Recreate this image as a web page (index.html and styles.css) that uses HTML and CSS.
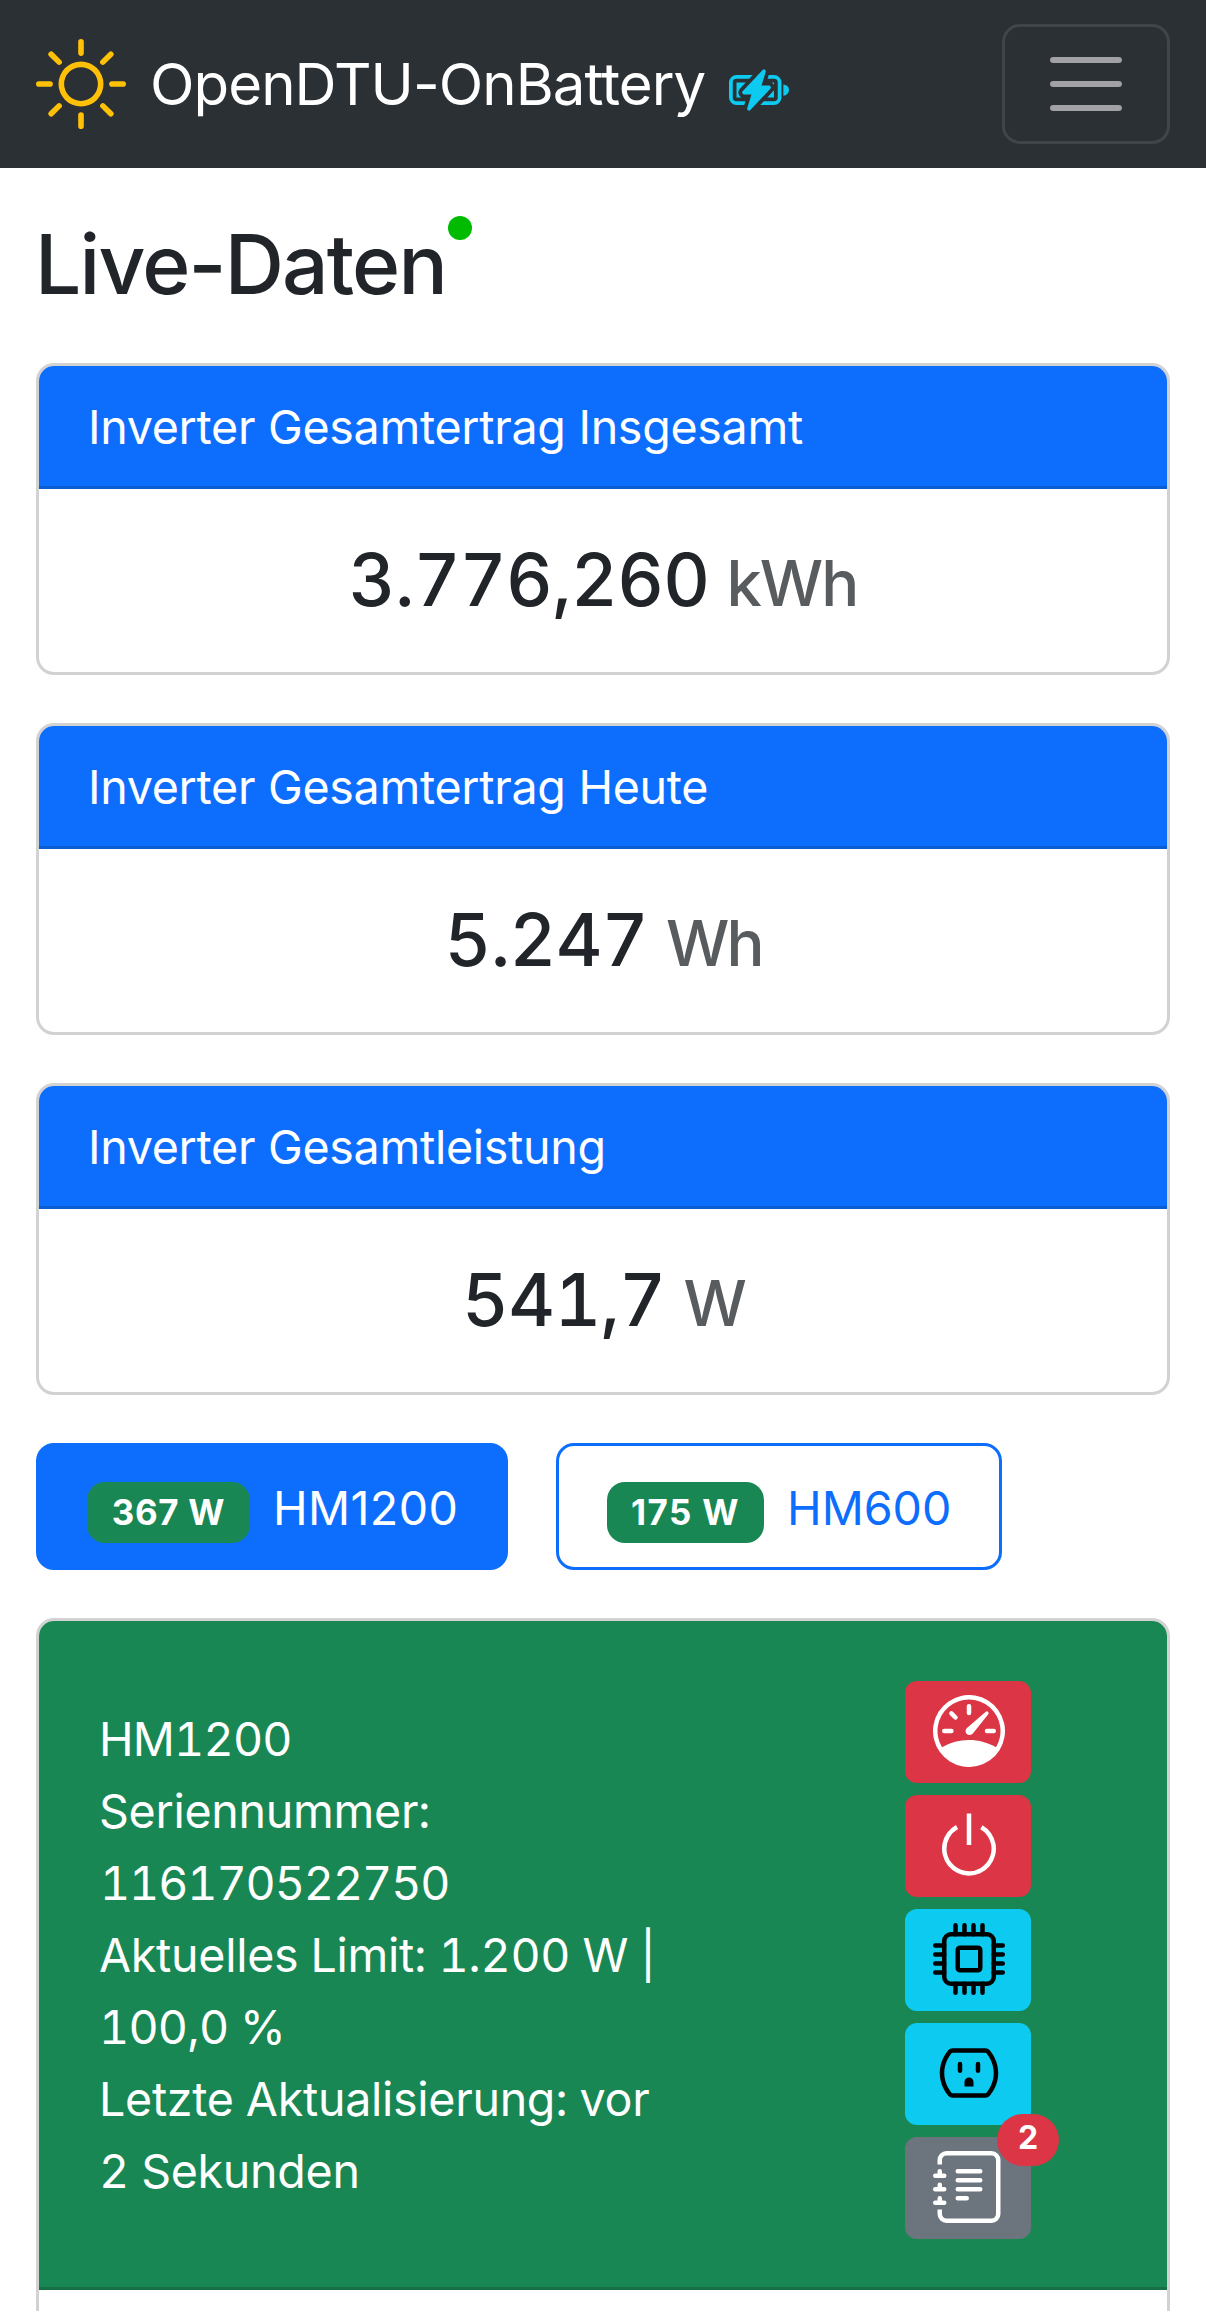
FILE: index.html
```html
<!DOCTYPE html>
<html lang="de">
<head>
<meta charset="utf-8">
<title>OpenDTU-OnBattery</title>
<link rel="stylesheet" href="styles.css">
</head>
<body>
<nav class="navbar">
  <a class="brand">
    <svg class="sun" viewBox="0 0 16 16" fill="currentColor"><path d="M8 11a3 3 0 1 1 0-6 3 3 0 0 1 0 6m0 1a4 4 0 1 0 0-8 4 4 0 0 0 0 8M8 0a.5.5 0 0 1 .5.5v2a.5.5 0 0 1-1 0v-2A.5.5 0 0 1 8 0m0 13a.5.5 0 0 1 .5.5v2a.5.5 0 0 1-1 0v-2A.5.5 0 0 1 8 13m8-5a.5.5 0 0 1-.5.5h-2a.5.5 0 0 1 0-1h2a.5.5 0 0 1 .5.5M3 8a.5.5 0 0 1-.5.5h-2a.5.5 0 0 1 0-1h2A.5.5 0 0 1 3 8m10.657-5.657a.5.5 0 0 1 0 .707l-1.414 1.415a.5.5 0 1 1-.707-.708l1.414-1.414a.5.5 0 0 1 .707 0m-9.193 9.193a.5.5 0 0 1 0 .707L3.05 13.657a.5.5 0 0 1-.707-.707l1.414-1.414a.5.5 0 0 1 .707 0m9.193 2.121a.5.5 0 0 1-.707 0l-1.414-1.414a.5.5 0 0 1 .707-.707l1.414 1.414a.5.5 0 0 1 0 .707M4.464 4.465a.5.5 0 0 1-.707 0L2.343 3.05a.5.5 0 1 1 .707-.707l1.414 1.414a.5.5 0 0 1 0 .708"/></svg>
    <span class="brand-name">OpenDTU-OnBattery</span>
    <svg class="battery" viewBox="0 0 16 16" fill="currentColor"><path d="M9.585 2.568a.5.5 0 0 1 .226.58L8.677 6.832h1.99a.5.5 0 0 1 .364.843l-5.334 5.667a.5.5 0 0 1-.842-.49L5.99 9.167H4a.5.5 0 0 1-.364-.843l5.333-5.667a.5.5 0 0 1 .616-.09z"/><path d="M2 4h4.332l-.94 1H2a1 1 0 0 0-1 1v4a1 1 0 0 0 1 1h2.38l-.308 1H2a2 2 0 0 1-2-2V6a2 2 0 0 1 2-2"/><path d="M2 6h2.45L2.908 7.639A1.5 1.5 0 0 0 3.313 10H2zm8.595-2-.308 1H12a1 1 0 0 1 1 1v4a1 1 0 0 1-1 1H9.276l-.942 1H12a2 2 0 0 0 2-2V6a2 2 0 0 0-2-2z"/><path d="M12 10h-1.783l1.542-1.639q.146-.156.241-.34zm0-3.354V6h-.646a1.5 1.5 0 0 1 .646.646M16 8a1.5 1.5 0 0 1-1.5 1.5v-3A1.5 1.5 0 0 1 16 8"/></svg>
  </a>
  <button class="toggler" aria-label="Navigation">
    <svg viewBox="0 0 30 30" fill="none" stroke="currentColor" stroke-width="2" stroke-linecap="round"><path d="M5 7h20M5 15h20M5 23h20"/></svg>
  </button>
</nav>

<main class="container">
  <h1 class="title">Live-Daten<span class="online-dot"></span></h1>

  <section class="card">
    <div class="card-header">Inverter Gesamtertrag Insgesamt</div>
    <h2 class="card-value"><span class="number">3.776,260</span><small class="unit unit-kwh">kWh</small></h2>
  </section>
  <section class="card">
    <div class="card-header">Inverter Gesamtertrag Heute</div>
    <h2 class="card-value"><span class="number">5.247</span><small class="unit">Wh</small></h2>
  </section>
  <section class="card">
    <div class="card-header">Inverter Gesamtleistung</div>
    <h2 class="card-value"><span class="number">541,7</span><small class="unit">W</small></h2>
  </section>

  <div class="pills">
    <button class="pill active"><span class="power">367 W</span><span class="pill-name">HM1200</span></button>
    <button class="pill"><span class="power narrow">175 W</span><span class="pill-name">HM600</span></button>
  </div>

  <section class="card inverter">
    <div class="inverter-header">
      <div class="info">
        <div class="figures">HM1200</div>
        <div>Seriennummer:</div>
        <div class="serial">116170522750</div>
        <div>Aktuelles Limit: 1.200 W |</div>
        <div class="figures">100,0 %</div>
        <div>Letzte Aktualisierung: vor</div>
        <div>2 Sekunden</div>
      </div>
      <div class="actions">
        <button class="btn danger"><svg viewBox="0 0 16 16" fill="currentColor"><path d="M8 2a.5.5 0 0 1 .5.5V4a.5.5 0 0 1-1 0V2.5A.5.5 0 0 1 8 2M3.732 3.732a.5.5 0 0 1 .707 0l.915.914a.5.5 0 1 1-.708.708l-.914-.915a.5.5 0 0 1 0-.707M2 8a.5.5 0 0 1 .5-.5h1.586a.5.5 0 0 1 0 1H2.5A.5.5 0 0 1 2 8m9.5 0a.5.5 0 0 1 .5-.5h1.5a.5.5 0 0 1 0 1H12a.5.5 0 0 1-.5-.5m.754-4.246a.39.39 0 0 0-.527-.02L7.547 7.31A.91.91 0 1 0 8.85 8.569l3.434-4.297a.39.39 0 0 0-.029-.518z"/><path fill-rule="evenodd" d="M6.664 15.889A8 8 0 1 1 9.336.11a8 8 0 0 1-2.672 15.78zm-4.665-4.283A11.95 11.95 0 0 1 8 10c2.186 0 4.236.585 6.001 1.606a7 7 0 1 0-12.002 0"/></svg></button>
        <button class="btn danger"><svg viewBox="0 0 16 16" fill="currentColor"><path d="M7.5 1v7h1V1z"/><path d="M3 8.812a5 5 0 0 1 2.578-4.375l-.485-.874A6 6 0 1 0 11 3.616l-.501.865A5 5 0 1 1 3 8.812"/></svg></button>
        <button class="btn info-btn"><svg viewBox="0 0 16 16" fill="none" stroke="currentColor" stroke-linecap="round"><rect x="2.5" y="2.5" width="11" height="11" rx="1.5"/><rect x="5.5" y="5.5" width="5" height="5" rx=".5"/><path d="M5 .5v2M7 .5v2M9 .5v2M11 .5v2M5 13.5v2M7 13.5v2M9 13.5v2M11 13.5v2M.5 5h2M.5 7h2M.5 9h2M.5 11h2M13.5 5h2M13.5 7h2M13.5 9h2M13.5 11h2"/></svg></button>
        <button class="btn info-btn"><svg viewBox="0 0 16 16" fill="currentColor"><path d="M3.34 2.994c.275-.338.68-.494 1.074-.494h7.172c.393 0 .798.156 1.074.494.578.708 1.84 2.534 1.84 5.006s-1.262 4.297-1.84 5.006c-.276.338-.68.494-1.074.494H4.414c-.394 0-.799-.156-1.074-.494C2.762 12.297 1.5 10.472 1.5 8s1.262-4.297 1.84-5.006m1.074.506a.38.38 0 0 0-.299.126C3.599 4.259 2.5 5.863 2.5 8s1.099 3.74 1.615 4.374c.06.073.163.126.3.126h7.17c.137 0 .24-.053.3-.126.516-.633 1.615-2.237 1.615-4.374s-1.099-3.74-1.615-4.374a.38.38 0 0 0-.3-.126z"/><path d="M6 5.5a.5.5 0 0 1 .5.5v1.5a.5.5 0 0 1-1 0V6a.5.5 0 0 1 .5-.5m4 0a.5.5 0 0 1 .5.5v1.5a.5.5 0 0 1-1 0V6a.5.5 0 0 1 .5-.5M7 10v1h2v-1a1 1 0 0 0-2 0"/></svg></button>
        <button class="btn secondary"><svg viewBox="0 0 16 16" fill="currentColor"><path d="M5 10.5a.5.5 0 0 1 .5-.5h2a.5.5 0 0 1 0 1h-2a.5.5 0 0 1-.5-.5m0-2a.5.5 0 0 1 .5-.5h5a.5.5 0 0 1 0 1h-5a.5.5 0 0 1-.5-.5m0-2a.5.5 0 0 1 .5-.5h5a.5.5 0 0 1 0 1h-5a.5.5 0 0 1-.5-.5m0-2a.5.5 0 0 1 .5-.5h5a.5.5 0 0 1 0 1h-5a.5.5 0 0 1-.5-.5"/><path d="M3 0h10a2 2 0 0 1 2 2v12a2 2 0 0 1-2 2H3a2 2 0 0 1-2-2v-1h1v1a1 1 0 0 0 1 1h10a1 1 0 0 0 1-1V2a1 1 0 0 0-1-1H3a1 1 0 0 0-1 1v1H1V2a2 2 0 0 1 2-2"/><path d="M1 5v-.5a.5.5 0 0 1 1 0V5h.5a.5.5 0 0 1 0 1h-2a.5.5 0 0 1 0-1zm0 3v-.5a.5.5 0 0 1 1 0V8h.5a.5.5 0 0 1 0 1h-2a.5.5 0 0 1 0-1zm0 3v-.5a.5.5 0 0 1 1 0v.5h.5a.5.5 0 0 1 0 1h-2a.5.5 0 0 1 0-1z"/></svg><span class="count">2</span></button>
      </div>
    </div>
    <div class="inverter-body"></div>
  </section>
</main>
</body>
</html>
```
FILE: styles.css
```css
* { box-sizing: border-box; }

body {
  margin: 0;
  height: 2311px;
  overflow: hidden;
  background: #fff;
  color: #212529;
  font: 400 46.6px/72px Inter, "Liberation Sans", sans-serif;
  letter-spacing: -.3px;
}

button {
  font: inherit;
  letter-spacing: inherit;
  margin: 0;
  padding: 0;
  border: 0;
}

svg { display: block; flex: none; }

.navbar {
  display: flex;
  align-items: center;
  justify-content: space-between;
  height: 168px;
  padding: 0 36px;
  background: #2b3035;
}
.brand { display: flex; align-items: center; color: #fff; }
.sun { width: 90px; height: 90px; color: #ffc107; }
.brand-name {
  margin-left: 24px;
  font-size: 58.2px;
  letter-spacing: -.95px;
  white-space: nowrap;
}
.battery { width: 60px; height: 60px; margin: 12px 0 0 24px; color: #0dcaf0; }
.toggler {
  display: flex;
  align-items: center;
  justify-content: center;
  width: 168px;
  height: 120px;
  border: 3px solid #414549;
  border-radius: 18px;
  background: transparent;
  color: #a1a1a6;
}
.toggler svg { width: 90px; height: 90px; }
.toggler path { transform: scaleX(1.09); transform-origin: center; }

.container { padding: 47px 36px 0; }

.title {
  position: relative;
  margin: 0 0 48px;
  text-indent: -1px;
  font-size: 82px;
  font-weight: 500;
  line-height: 100px;
  letter-spacing: -1.8px;
}
.online-dot {
  position: absolute;
  top: 1px;
  left: 412px;
  width: 24px;
  height: 24px;
  border-radius: 50%;
  background: #00bb00;
}

.card {
  margin-bottom: 48px;
  border: 3px solid #d2d2d2;
  border-radius: 18px;
  overflow: hidden;
}
.card-header {
  height: 123px;
  padding: 25px 48px 23px 49px;
  border-bottom: 3px solid #0b5ed2;
  background: #0d6efd;
  color: #fff;
}
.card-value {
  display: flex;
  align-items: baseline;
  justify-content: center;
  margin: 0;
  height: 183px;
  padding-top: 47px;
  font-size: 72.2px;
  font-weight: 500;
  line-height: 87px;
}
.number { font-variant-numeric: tabular-nums; letter-spacing: -.6px; }
.unit {
  margin-left: 18px;
  font-size: 63.2px;
  color: #585c5f;
  letter-spacing: -3px;
}
.unit-kwh { margin-left: 17px; letter-spacing: -2px; }

.pills { display: flex; gap: 48px; margin-bottom: 48px; }
.pill {
  display: flex;
  align-items: center;
  width: 472px;
  height: 127px;
  padding-left: 48px;
  border: 3px solid #0d6efd;
  border-radius: 18px;
  background: #fff;
  color: #0d6efd;
}
.pill:last-child { width: 446px; letter-spacing: 0; }
.pill.active { background: #0d6efd; color: #fff; letter-spacing: .4px; }
.pill-name { margin: 3px 0 0 23px; }
.power {
  width: 163px;
  height: 61px;
  margin-top: 12px;
  border-radius: 18px;
  background: #198754;
  color: #fff;
  font-size: 34.9px;
  font-weight: 700;
  line-height: 61px;
  letter-spacing: .7px;
  text-align: center;
}
.power.narrow { width: 157px; letter-spacing: 1.4px; }

.inverter { margin-bottom: 0; border-bottom: 0; border-radius: 18px 18px 0 0; }
.inverter-header {
  display: flex;
  justify-content: space-between;
  height: 669px;
  padding: 60px 136px 0 60px;
  border-bottom: 3px solid #176f47;
  background: #198754;
  color: #fff;
}
.inverter-body { height: 60px; }
.info { padding-top: 22px; white-space: nowrap; font-variant-numeric: tabular-nums; }
.info .figures { letter-spacing: -.8px; }
.info .serial { margin-left: 1px; letter-spacing: -1.1px; }

.actions { display: flex; flex-direction: column; gap: 12px; }
.btn {
  position: relative;
  display: flex;
  align-items: center;
  justify-content: center;
  width: 126px;
  height: 102px;
  padding: 0 0 2px 2px;
  border-radius: 12px;
  color: #fff;
}
.btn svg { width: 72px; height: 72px; }
.danger { background: #dc3545; }
.info-btn { background: #0dcaf0; color: #000; }
.secondary { background: #6c757d; }
.count {
  position: absolute;
  top: -23px;
  left: 92px;
  width: 62px;
  height: 52px;
  border-radius: 26px;
  background: #dc3545;
  font-size: 32px;
  font-weight: 700;
  line-height: 48px;
  text-align: center;
}
```
